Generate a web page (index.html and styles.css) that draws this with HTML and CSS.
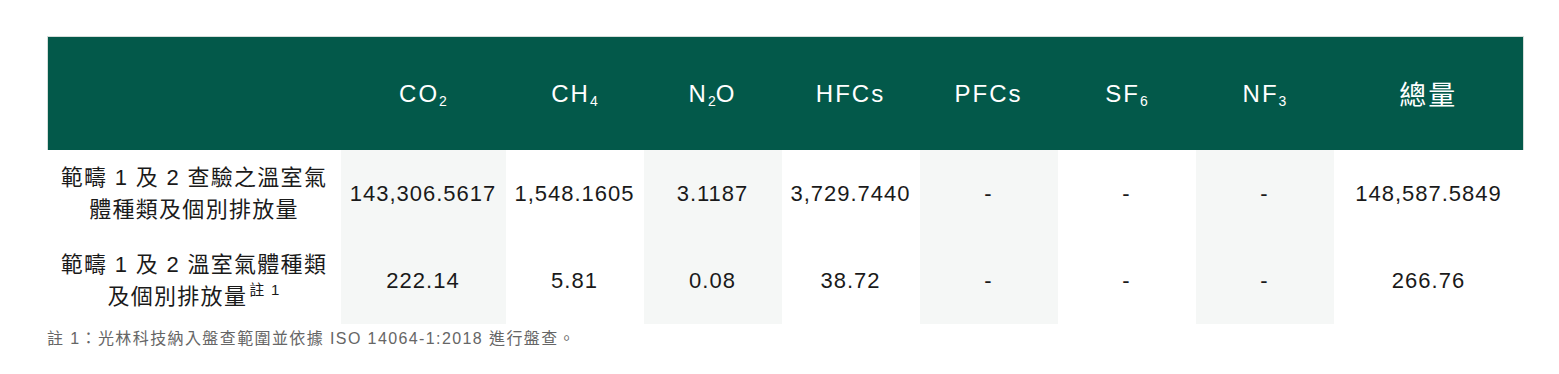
FILE: index.html
```html
<!DOCTYPE html>
<html lang="zh-Hant">
<head>
  <meta charset="UTF-8" />
  <title>溫室氣體排放量</title>
  <link rel="stylesheet" href="styles.css">
</head>
<body>
  <div class="ghg-wrap">
    <table class="ghg-table">
      <colgroup>
        <col class="col-label">
        <col class="col-co2">
        <col class="col-gas">
        <col class="col-gas">
        <col class="col-gas">
        <col class="col-gas">
        <col class="col-gas">
        <col class="col-gas">
        <col class="col-total">
      </colgroup>
      <thead>
        <tr>
          <th></th>
          <th>CO<sub>2</sub></th>
          <th>CH<sub>4</sub></th>
          <th>N<sub>2</sub>O</th>
          <th>HFCs</th>
          <th>PFCs</th>
          <th>SF<sub>6</sub></th>
          <th>NF<sub>3</sub></th>
          <th class="cjk-head">總量</th>
        </tr>
      </thead>
      <tbody>
        <tr>
          <td class="label">範疇 1 及 2 查驗之溫室氣<br>體種類及個別排放量</td>
          <td class="shade">143,306.5617</td>
          <td>1,548.1605</td>
          <td class="shade">3.1187</td>
          <td>3,729.7440</td>
          <td class="shade">-</td>
          <td>-</td>
          <td class="shade">-</td>
          <td>148,587.5849</td>
        </tr>
        <tr>
          <td class="label">範疇 1 及 2 溫室氣體種類<br>及個別排放量<sup>註 1</sup></td>
          <td class="shade">222.14</td>
          <td>5.81</td>
          <td class="shade">0.08</td>
          <td>38.72</td>
          <td class="shade">-</td>
          <td>-</td>
          <td class="shade">-</td>
          <td>266.76</td>
        </tr>
      </tbody>
    </table>
    <p class="note">註 1：光林科技納入盤查範圍並依據 ISO 14064-1:2018 進行盤查。</p>
  </div>
</body>
</html>
```

FILE: styles.css
```css
body {
  margin: 0;
  background: #ffffff;
  font-family: "Liberation Sans", Arial, "Noto Sans CJK TC", sans-serif;
  color: #1a1a1a;
}

.ghg-wrap {
  padding: 36px 36px 0 47px;
}

.ghg-table {
  width: 1476px;
  table-layout: fixed;
  border-collapse: collapse;
}

.col-label { width: 293px; }
.col-co2 { width: 165px; }
.col-gas { width: 138px; }
.col-total { width: 190px; }

.ghg-table th {
  height: 113px;
  padding: 0;
  background: #03594a;
  color: #ffffff;
  font-size: 24px;
  font-weight: normal;
  letter-spacing: 2px;
  text-align: center;
  border-top: 1px solid #d5ddd9;
}

.ghg-table th:first-child {
  border-left: 1px solid #d5ddd9;
}

.ghg-table th:last-child {
  border-right: 1px solid #d5ddd9;
}

.ghg-table th sub {
  font-size: 14px;
  vertical-align: -4px;
  line-height: 0;
  letter-spacing: 0;
}

.ghg-table th.cjk-head {
  font-size: 27px;
  letter-spacing: 2px;
}

.ghg-table td {
  padding: 12px 4px 11px;
  font-size: 22px;
  line-height: 32px;
  letter-spacing: 1px;
  text-align: center;
  white-space: nowrap;
}

.ghg-table td.label {
  padding: 12px 0 11px;
  letter-spacing: 1.3px;
}

.ghg-table td.shade {
  background: #f5f7f6;
}

.ghg-table td sup {
  font-size: 15px;
  line-height: 0;
  vertical-align: 9px;
  margin-left: 2px;
}

.note {
  margin: 0;
  font-size: 16px;
  line-height: 30px;
  letter-spacing: 1.4px;
  color: #666666;
}
```
